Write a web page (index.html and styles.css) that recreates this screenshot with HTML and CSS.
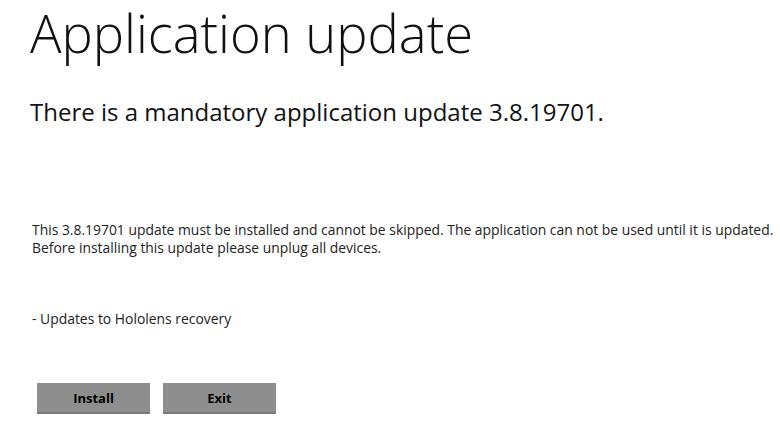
FILE: index.html
```html
<!DOCTYPE html>
<html lang="en">
<head>
  <meta charset="UTF-8">
  <title>Application update</title>
  <link rel="stylesheet" href="styles.css">
</head>
<body>
  <div class="page">
    <h1 class="title">Application update</h1>
    <h2 class="subtitle">There is a mandatory application update 3.8.19701.</h2>

    <p class="message">This 3.8.19701 update must be installed and cannot be skipped. The application can not be used until it is updated.<br>Before installing this update please unplug all devices.</p>

    <p class="notes">- Updates to Hololens recovery</p>

    <div class="actions">
      <button class="action-btn">Install</button>
      <button class="action-btn">Exit</button>
    </div>
  </div>
</body>
</html>
```

FILE: styles.css
```css
body {
  margin: 0;
  background: #ffffff;
  color: #111111;
  font-family: "Open Sans", "Noto Sans", sans-serif;
}
.page {
  padding: 0 0 0 30px;
}
.title {
  margin: 0;
  font-size: 52.5px;
  font-weight: 300;
  line-height: 66px;
}
.subtitle {
  margin: 29px 0 0 0;
  font-size: 24px;
  font-weight: 400;
  line-height: 34px;
}
.message {
  margin: 92px 0 0 2px;
  font-size: 13.9px;
  line-height: 18px;
  color: #222222;
}
.notes {
  margin: 53px 0 0 2px;
  font-size: 13.9px;
  line-height: 18px;
  color: #222222;
}
.actions {
  display: flex;
  gap: 13px;
  margin: 55px 0 0 7px;
}
.action-btn {
  width: 113px;
  height: 31px;
  background: #8e8e8e;
  border: none;
  border-bottom: 2px solid #7a7a7a;
  font-family: "Open Sans", sans-serif;
  font-size: 13px;
  font-weight: 700;
  color: #000000;
  padding: 0;
}
```
